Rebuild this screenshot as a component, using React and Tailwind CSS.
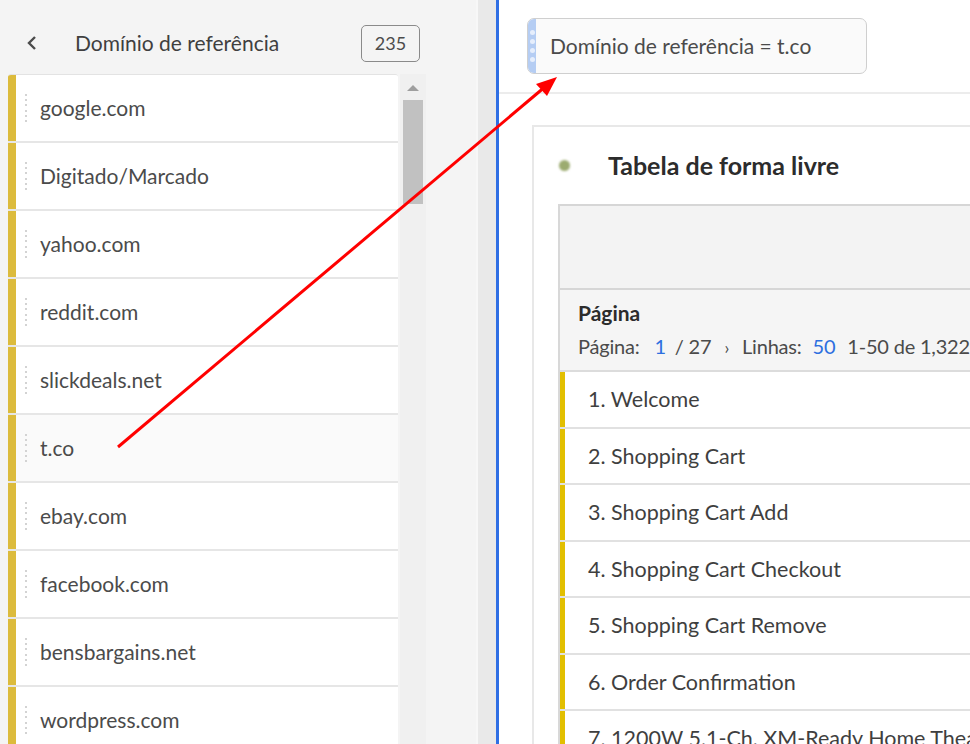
import React from "react";

const domains = [
  "google.com",
  "Digitado/Marcado",
  "yahoo.com",
  "reddit.com",
  "slickdeals.net",
  "t.co",
  "ebay.com",
  "facebook.com",
  "bensbargains.net",
  "wordpress.com",
];

const pages = [
  "1. Welcome",
  "2. Shopping Cart",
  "3. Shopping Cart Add",
  "4. Shopping Cart Checkout",
  "5. Shopping Cart Remove",
  "6. Order Confirmation",
  "7. 1200W 5.1-Ch. XM-Ready Home Theater System",
];

function DragDots() {
  return (
    <div className="flex h-[28px] w-[2px] shrink-0 flex-col justify-between">
      {[0, 1, 2, 3, 4, 5].map((i) => (
        <span key={i} className="block h-[2px] w-[2px] bg-[#d3d3d3]" />
      ))}
    </div>
  );
}

function DomainRow({ label, active }) {
  return (
    <div className="flex h-[68px] shrink-0 border-b-2 border-[#e6e6e6]">
      <div className="w-[8px] shrink-0 bg-[#dcbb3c]" />
      <div
        className={
          "flex flex-1 items-center gap-[13px] pl-[9px] " +
          (active ? "bg-[#fafafa]" : "bg-white")
        }
      >
        <DragDots />
        <span className="text-[21px] text-[#4b4b4b]">{label}</span>
      </div>
    </div>
  );
}

function LeftPanel() {
  return (
    <div className="flex w-[476px] shrink-0 flex-col bg-[#f4f4f4]">
      <div className="flex h-[74px] shrink-0 items-center pt-[12px] pl-[25px] pr-[56px]">
        <svg width="14" height="16" viewBox="0 0 14 16" className="text-[#4b4b4b]">
          <path d="M10 2 L4 8 L10 14" fill="none" stroke="currentColor" strokeWidth="2.4" />
        </svg>
        <span className="ml-[36px] text-[21px] text-[#3f3f3f]">Domínio de referência</span>
        <div className="ml-auto flex h-[37px] w-[59px] items-center justify-center rounded-[5px] border-[1.5px] border-[#8a8a8a] text-[18px] text-[#4b4b4b]">
          235
        </div>
      </div>
      <div className="flex flex-1 pl-[8px]">
        <div className="flex w-[390px] flex-col overflow-hidden rounded-t-[3px] border-t border-[#e3e3e3]">
          {domains.map((d) => (
            <DomainRow key={d} label={d} active={d === "t.co"} />
          ))}
        </div>
        <div className="ml-[2px] flex w-[26px] flex-col items-center bg-[#f0f0f0] pt-[10px]">
          <svg width="12" height="8" viewBox="0 0 12 8">
            <path d="M0 7 L6 1 L12 7 Z" fill="#9f9f9f" />
          </svg>
          <div className="mt-[8px] h-[104px] w-[20px] bg-[#c1c1c1]" />
        </div>
      </div>
    </div>
  );
}

function FilterPill() {
  return (
    <div className="flex h-[56px] w-[340px] overflow-hidden rounded-[7px] border border-[#cfcfcf] bg-[#fafafa]">
      <div className="flex w-[8px] flex-col items-center justify-center gap-[4px] bg-[#b5cdf3]">
        {[0, 1, 2, 3].map((i) => (
          <span key={i} className="block h-[5px] w-[5px] rounded-full bg-[#e6eefc]" />
        ))}
      </div>
      <div className="flex items-center pl-[14px] text-[21px] text-[#4b4b4b]">
        Domínio de referência = t.co
      </div>
    </div>
  );
}

function PageRow({ label }) {
  return (
    <div className="flex h-[56.5px] shrink-0 border-b-2 border-[#e1e1e1]">
      <div className="w-[5px] shrink-0 bg-[#e2bf00]" />
      <div className="flex flex-1 items-center whitespace-nowrap pl-[23px] text-[21.5px] text-[#3f3f3f]">
        {label}
      </div>
    </div>
  );
}

function RightPanel() {
  return (
    <div className="flex min-w-0 flex-1 flex-col overflow-hidden bg-white">
      <div className="h-[94px] shrink-0 border-b-2 border-[#ececec] pt-[18px] pl-[28px]">
        <FilterPill />
      </div>
      <div className="ml-[33px] mt-[31px] flex flex-1 flex-col border-l-2 border-t-2 border-[#e8e8e8]">
        <div className="flex h-[77px] shrink-0 items-center pl-[25px]">
          <span className="block h-[11px] w-[11px] rounded-full bg-[#9cab70] blur-[1px]" />
          <span className="ml-[38px] text-[25px] font-bold text-[#2c2c2c]">
            Tabela de forma livre
          </span>
        </div>
        <div className="ml-[24px] flex flex-col border-l-2 border-[#d8d8d8]">
          <div className="h-[86px] shrink-0 border-t-2 border-b-2 border-[#d6d6d6] bg-[#f3f3f3]" />
          <div className="flex h-[82px] shrink-0 flex-col justify-center border-b-2 border-[#dcdcdc] bg-[#f5f5f5] pl-[18px] whitespace-nowrap">
            <span className="text-[21px] font-bold leading-[26px] text-[#2c2c2c]">Página</span>
            <span className="mt-[8px] text-[20px] leading-[24px] tracking-[-0.2px] text-[#4b4b4b]">
              Página: <span className="ml-[10px] text-[#2d6fe0]">1</span>
              <span className="ml-[9px]">/ 27</span>
              <span className="ml-[13px] mr-[13px] text-[17px]">›</span>
              Linhas: <span className="ml-[6px] text-[#2d6fe0]">50</span>
              <span className="ml-[12px]">1-50 de 1,322</span>
            </span>
          </div>
          {pages.map((p) => (
            <PageRow key={p} label={p} />
          ))}
        </div>
      </div>
    </div>
  );
}

export default function App() {
  return (
    <div className="relative flex h-[744px] w-[970px] overflow-hidden bg-white font-['Lato',sans-serif]">
      <LeftPanel />
      <div className="w-[20px] shrink-0 border-l-2 border-[#f7f7f7] bg-[#e9e9e9]" />
      <div className="w-[3px] shrink-0 bg-[#2f6fe4]" />
      <RightPanel />
      <svg className="pointer-events-none absolute inset-0" width="970" height="744" viewBox="0 0 970 744">
        <line x1="118" y1="447" x2="546" y2="86" stroke="#ff0000" strokeWidth="3" />
        <polygon points="557,77 547,96 536,84" fill="#ff0000" />
      </svg>
    </div>
  );
}
